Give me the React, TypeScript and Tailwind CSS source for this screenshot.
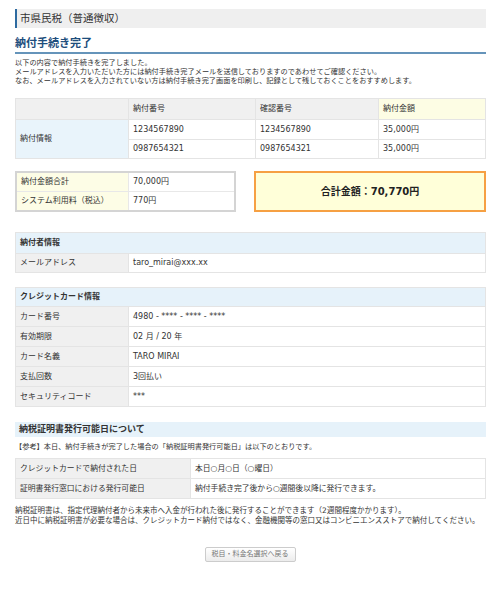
export default function App() {
  const cardRows: [string, string][] = [
    ["カード番号", "4980 - **** - **** - ****"],
    ["有効期限", "02 月 / 20 年"],
    ["カード名義", "TARO MIRAI"],
    ["支払回数", "3回払い"],
    ["セキュリティコード", "***"],
  ];
  return (
    <div className="w-[500px] h-[600px] bg-white text-[#333] font-['DejaVu_Sans','Noto_Sans_CJK_JP',sans-serif]">
      <div className="ml-[15px] w-[471px] pt-[9px]">
        <div className="h-[19px] bg-[#efefef] border-l-2 border-[#2d6aa0] pl-[3px] flex items-center text-[10.5px] leading-none">
          市県民税（普通徴収）
        </div>
        <div className="mt-[9px] pb-[1px] border-b-2 border-[#6594ba] text-[11px] font-bold text-[#1d4d7c] leading-[14px]">
          納付手続き完了
        </div>
        <div className="mt-[4px] text-[7.2px] leading-[9px] whitespace-nowrap">
          <div>以下の内容で納付手続きを完了しました。</div>
          <div>メールアドレスを入力いただいた方には納付手続き完了メールを送信しておりますのであわせてご確認ください。</div>
          <div>なお、メールアドレスを入力されていない方は納付手続き完了画面を印刷し、記録として残しておくことをおすすめします。</div>
        </div>

        <div className="mt-[13px] grid grid-cols-[112px_126px_122px_1fr] grid-rows-[20px_19px_18px] gap-px bg-[#e4e4e4] border border-[#e4e4e4] text-[8px] leading-none">
          <div className="bg-[#f0f0f0]"></div>
          <div className="bg-[#f0f0f0] flex items-center pl-[4px]">納付番号</div>
          <div className="bg-[#f0f0f0] flex items-center pl-[4px]">確認番号</div>
          <div className="bg-[#fdfde4] flex items-center pl-[4px]">納付金額</div>
          <div className="row-span-2 bg-[#e9f4fb] flex items-center pl-[4px]">納付情報</div>
          <div className="bg-white flex items-center pl-[4px]">1234567890</div>
          <div className="bg-white flex items-center pl-[4px]">1234567890</div>
          <div className="bg-white flex items-center pl-[4px]">35,000円</div>
          <div className="bg-white flex items-center pl-[4px]">0987654321</div>
          <div className="bg-white flex items-center pl-[4px]">0987654321</div>
          <div className="bg-white flex items-center pl-[4px]">35,000円</div>
        </div>

        <div className="mt-[12px] flex items-stretch justify-between">
          <div className="w-[221px] border-2 border-[#d4d4d4] grid grid-cols-[111px_1fr] grid-rows-[18px_18px] gap-px bg-[#e8e8e8] text-[8px] leading-none">
            <div className="bg-[#fdfde6] flex items-center pl-[4px]">納付金額合計</div>
            <div className="bg-white flex items-center pl-[4px]">70,000円</div>
            <div className="bg-[#fdfde6] flex items-center pl-[4px]">システム利用料（税込）</div>
            <div className="bg-white flex items-center pl-[4px]">770円</div>
          </div>
          <div className="w-[232px] h-[41px] border-2 border-[#f6a043] bg-[#ffffd9] flex items-center justify-center text-[10px] font-bold text-[#222]">
            合計金額：70,770円
          </div>
        </div>

        <div className="mt-[20px] grid grid-cols-[112px_1fr] grid-rows-[20px_18px] gap-px bg-[#e4e4e4] border border-[#e4e4e4] text-[8px] leading-none">
          <div className="col-span-2 bg-[#e6f2fa] flex items-center pl-[4px] font-bold">納付者情報</div>
          <div className="bg-[#f0f0f0] flex items-center pl-[4px]">メールアドレス</div>
          <div className="bg-white flex items-center pl-[4px]">taro_mirai@xxx.xx</div>
        </div>

        <div className="mt-[14px] grid grid-cols-[112px_1fr] grid-rows-[18px_19px_19px_19px_19px_19px] gap-px bg-[#e4e4e4] border border-[#e4e4e4] text-[8px] leading-none">
          <div className="col-span-2 bg-[#e6f2fa] flex items-center pl-[4px] font-bold">クレジットカード情報</div>
          {cardRows.map(([k, v]) => (
            <div key={k} className="contents">
              <div className="bg-[#f0f0f0] flex items-center pl-[4px]">{k}</div>
              <div className="bg-white flex items-center pl-[4px]">{v}</div>
            </div>
          ))}
        </div>

        <div className="mt-[15px] h-[15px] bg-[#e6f2fa] flex items-center pl-[4px] text-[9px] font-bold leading-none">
          納税証明書発行可能日について
        </div>
        <div className="mt-[5px] text-[7.2px] leading-[10px] whitespace-nowrap">
          【参考】本日、納付手続きが完了した場合の「納税証明書発行可能日」は以下のとおりです。
        </div>
        <div className="mt-[6px] grid grid-cols-[174px_1fr] grid-rows-[19px_19px] gap-px bg-[#e4e4e4] border border-[#e4e4e4] text-[7.8px] leading-none">
          <div className="bg-[#f0f0f0] flex items-center pl-[4px]">クレジットカードで納付された日</div>
          <div className="bg-white flex items-center pl-[4px]">本日○月○日（○曜日）</div>
          <div className="bg-[#f0f0f0] flex items-center pl-[4px]">証明書発行窓口における発行可能日</div>
          <div className="bg-white flex items-center pl-[4px]">納付手続き完了後から○週間後以降に発行できます。</div>
        </div>

        <div className="mt-[7px] text-[7.5px] leading-[10px] whitespace-nowrap">
          <div>納税証明書は、指定代理納付者から未来市へ入金が行われた後に発行することができます（2週間程度かかります）。</div>
          <div>近日中に納税証明書が必要な場合は、クレジットカード納付ではなく、金融機関等の窓口又はコンビニエンスストアで納付してください。</div>
        </div>
      </div>

      <div className="mt-[21px] flex justify-center">
        <button className="w-[91px] h-[15px] border border-[#cccccc] rounded-[2px] bg-gradient-to-b from-white to-[#ececec] text-[7px] text-[#777] leading-none flex items-center justify-center">
          税目・料金名選択へ戻る
        </button>
      </div>
    </div>
  );
}
